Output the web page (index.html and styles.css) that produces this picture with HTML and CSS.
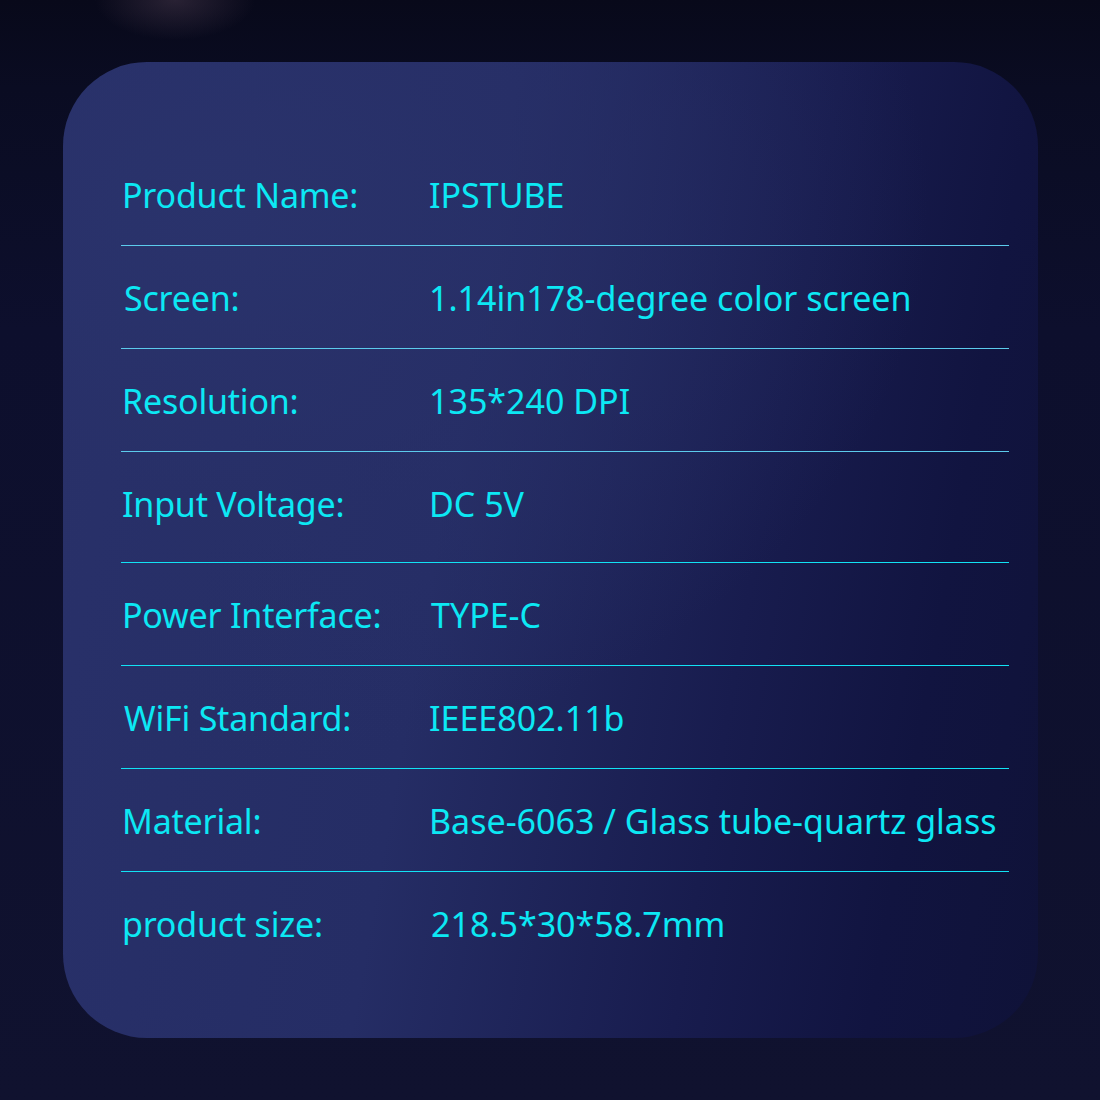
FILE: index.html
```html
<!DOCTYPE html>
<html lang="en">
<head>
<meta charset="utf-8">
<title>IPSTUBE Specifications</title>
<link rel="stylesheet" href="styles.css">
</head>
<body>
<main class="page">
  <section class="card">
    <div class="specs">
      <div class="row soft">
        <span class="label">Product Name:</span>
        <span class="value">IPSTUBE</span>
      </div>
      <div class="row soft">
        <span class="label nudge">Screen:</span>
        <span class="value">1.14in178-degree color screen</span>
      </div>
      <div class="row soft">
        <span class="label">Resolution:</span>
        <span class="value">135*240 DPI</span>
      </div>
      <div class="row tall">
        <span class="label">Input Voltage:</span>
        <span class="value">DC 5V</span>
      </div>
      <div class="row">
        <span class="label">Power Interface:</span>
        <span class="value nudge">TYPE-C</span>
      </div>
      <div class="row">
        <span class="label nudge">WiFi Standard:</span>
        <span class="value">IEEE802.11b</span>
      </div>
      <div class="row">
        <span class="label">Material:</span>
        <span class="value">Base-6063 / Glass tube-quartz glass</span>
      </div>
      <div class="row last">
        <span class="label">product size:</span>
        <span class="value nudge">218.5*30*58.7mm</span>
      </div>
    </div>
  </section>
</main>
</body>
</html>
```

FILE: styles.css
```css
* { box-sizing: border-box; }

html, body {
  margin: 0;
  padding: 0;
}

body {
  width: 1100px;
  height: 1100px;
  overflow: hidden;
  font-family: "Noto Sans", "Open Sans", sans-serif;
  background:
    radial-gradient(ellipse 80px 40px at 175px 0px, rgba(90, 70, 90, 0.4), rgba(90, 70, 90, 0) 100%),
    linear-gradient(180deg, #08091a 0%, #0a0c22 8%, #0d0f2d 30%, #10122f 100%);
}

.page {
  height: 1100px;
  padding: 62px 62px 62px 63px;
}

.card {
  width: 975px;
  height: 976px;
  border-radius: 84px;
  background:
    radial-gradient(ellipse 900px 700px at 15% 15%, rgba(42, 51, 108, 0.9) 0%, rgba(40, 48, 104, 0.6) 40%, rgba(30, 36, 90, 0) 80%),
    linear-gradient(100deg, #29316a 0%, #252d65 40%, #181c4e 68%, #111440 85%, #0f1238 100%);
  padding: 81px 30px 0 58px;
}

.specs {
  width: 888px;
  display: flex;
  flex-direction: column;
}

.row {
  display: grid;
  grid-template-columns: 308px 1fr;
  align-items: center;
  height: 103px;
  padding-top: 1px;
  border-bottom: 1px solid #12e2f4;
  color: #0ce8f4;
  font-size: 34px;
  line-height: 40px;
  white-space: nowrap;
}

.row.soft {
  border-bottom-color: #5ccbec;
}

.row.tall {
  height: 111px;
  padding-bottom: 7px;
}

.row.last {
  border-bottom: none;
}

.label,
.value {
  display: block;
}

.label {
  padding-left: 1px;
  letter-spacing: -0.2px;
}

.label.nudge {
  padding-left: 3px;
}

.value.nudge {
  padding-left: 2px;
}
```
